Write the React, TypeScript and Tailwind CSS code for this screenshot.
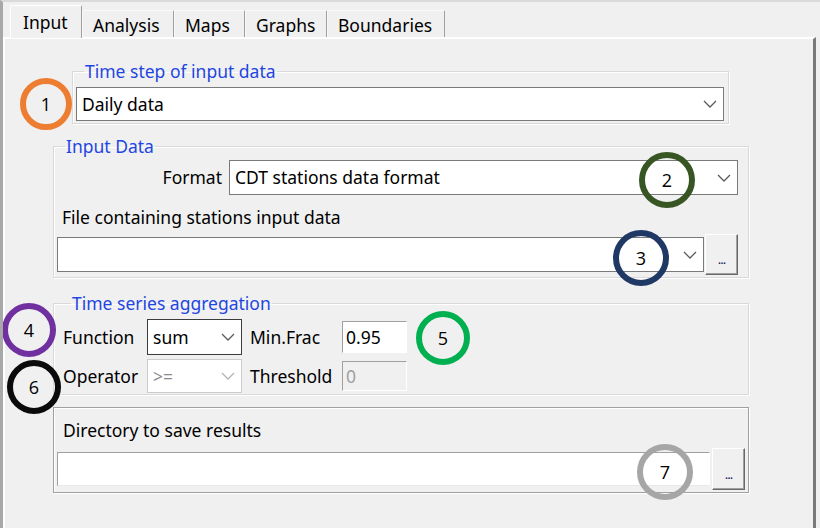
import type { ReactNode } from "react";

const font = { fontFamily: '"Noto Sans", "Open Sans", sans-serif' };

const tabs = [
  { label: "Input", w: "w-[72px]", active: true },
  { label: "Analysis", w: "w-[92px]", active: false },
  { label: "Maps", w: "w-[71px]", active: false },
  { label: "Graphs", w: "w-[82px]", active: false },
  { label: "Boundaries", w: "w-[118px]", active: false },
];

function Chevron({ disabled }: { disabled?: boolean }) {
  return (
    <svg width="14" height="8" viewBox="0 0 14 8" className="shrink-0">
      <path
        d="M1 1l6 6 6-6"
        fill="none"
        stroke={disabled ? "#b4b4b4" : "#5a5a5a"}
        strokeWidth="1.3"
      />
    </svg>
  );
}

function Combo({
  value,
  className,
  disabled,
  dark,
}: {
  value: string;
  className: string;
  disabled?: boolean;
  dark?: boolean;
}) {
  return (
    <div
      className={`flex items-center justify-between border bg-white pl-[5px] pr-[6px] ${
        dark ? "border-[#3c3c3c]" : disabled ? "border-[#cccccc]" : "border-[#7a7a7a]"
      } ${className}`}
    >
      <span className={disabled ? "text-[#8a8a8a]" : "text-black"}>{value}</span>
      <Chevron disabled={disabled} />
    </div>
  );
}

function DotsButton({ className }: { className: string }) {
  return (
    <div
      className={`flex items-end justify-center border border-t-white border-l-white border-r-[#696969] border-b-[#696969] bg-[#f0f0f0] pb-[8px] shadow-[inset_-1px_-1px_0_#a0a0a0] ${className}`}
    >
      <span className="text-[13px] leading-none tracking-[-1px] text-[#20206a]">...</span>
    </div>
  );
}

function Group({
  legend,
  className,
  children,
}: {
  legend: string;
  className: string;
  children: ReactNode;
}) {
  return (
    <fieldset
      className={`border border-[#d9d9d9] shadow-[inset_1px_1px_0_#fff,1px_1px_0_#fff] ${className}`}
    >
      <legend className="ml-[8px] px-[1px] leading-[22px] text-[#1f46e2]">{legend}</legend>
      {children}
    </fieldset>
  );
}

function Mark({ n, color, x, y, size }: { n: number; color: string; x: number; y: number; size: number }) {
  return (
    <div
      className="absolute flex items-center justify-center rounded-full border-[6px] text-[18px] text-black"
      style={{
        left: x - size / 2,
        top: y - size / 2,
        width: size,
        height: size,
        borderColor: color,
        fontFamily: '"Open Sans", sans-serif',
      }}
    >
      {n}
    </div>
  );
}

export default function App() {
  return (
    <div
      className="relative flex h-[528px] w-[820px] flex-col overflow-hidden border-t-2 border-l-[3px] border-t-[#dadada] border-l-[#a8a8a8] bg-[#f0f0f0] text-[17.5px] text-black"
      style={font}
    >
      {/* tabs */}
      <div className="flex h-[35px] items-end pl-[7px]">
        {tabs.map((t) =>
          t.active ? (
            <div
              key={t.label}
              className={`${t.w} relative z-10 -mb-[1px] flex h-[33px] items-start rounded-t-[2px] border-t border-l border-r border-t-white border-l-white border-r-[#a0a0a0] bg-[#f0f0f0] pl-[12px] pt-[3px]`}
            >
              {t.label}
            </div>
          ) : (
            <div
              key={t.label}
              className={`${t.w} flex h-[27px] items-start rounded-t-[2px] border-t border-r border-l border-t-[#fafafa] border-l-[#f8f8f8] border-r-[#a0a0a0] pl-[10px] pt-[1px]`}
            >
              {t.label}
            </div>
          )
        )}
        <div className="flex-1" />
      </div>

      {/* pane */}
      <div className="mr-[4px] flex flex-1 flex-col border-t-2 border-l-2 border-r-[3px] border-t-white border-l-white border-r-[#7a7a7a] pl-[5px]">
        <Group legend="Time step of input data" className="ml-[62px] mt-[21px] w-[657px] px-[3px] pb-[2px]">
          <Combo value="Daily data" className="mt-[5px] h-[34px] w-[648px]" />
        </Group>

        <Group legend="Input Data" className="ml-[43px] mt-[11px] w-[696px] px-[3px] pb-[2px]">
          <div className="mt-[3px] flex items-center">
            <span className="w-[172px] pr-[7px] text-right">Format</span>
            <Combo value="CDT stations data format" className="h-[35px] w-[509px]" />
          </div>
          <div className="mt-[11px] pl-[5px] leading-[22px]">File containing stations input data</div>
          <div className="mt-[6px] flex items-center">
            <Combo value="" className="h-[35px] w-[647px]" />
            <DotsButton className="ml-[1px] h-[41px] w-[33px]" />
          </div>
        </Group>

        <Group legend="Time series aggregation" className="ml-[43px] mt-[14px] w-[696px] px-[9px] pb-[1px]">
          <div className="mt-[5px] flex items-center">
            <span className="w-[84px]">Function</span>
            <Combo value="sum" dark className="h-[36px] w-[95px]" />
            <span className="ml-[8px] w-[92px]">Min.Frac</span>
            <div className="flex h-[32px] w-[65px] items-center border border-[#a0a0a0] border-r-white border-b-white bg-white pl-[3px]">
              0.95
            </div>
          </div>
          <div className="mt-[4px] flex items-center">
            <span className="w-[84px]">Operator</span>
            <Combo value=">=" disabled className="h-[34px] w-[95px]" />
            <span className="ml-[8px] w-[92px]">Threshold</span>
            <div className="flex h-[30px] w-[65px] items-center border border-[#a0a0a0] border-r-white border-b-white bg-[#f0f0f0] pl-[3px] text-[#a0a0a0]">
              0
            </div>
          </div>
        </Group>

        <div className="ml-[43px] mt-[12px] w-[696px] border border-[#a0a0a0] px-[3px] pb-[2px] shadow-[inset_1px_1px_0_#fff,1px_1px_0_#fff]">
          <div className="pl-[6px] pt-[11px] leading-[22px]">Directory to save results</div>
          <div className="mt-[7px] flex items-center">
            <div className="h-[34px] w-[654px] border border-[#a0a0a0] border-r-white border-b-[#e8e8e8] bg-white" />
            <DotsButton className="ml-[2px] h-[42px] w-[33px]" />
          </div>
        </div>
      </div>

      <Mark n={1} color="#ed7d31" x={43} y={102} size={52} />
      <Mark n={2} color="#375623" x={664} y={178} size={56} />
      <Mark n={3} color="#203864" x={638} y={256} size={56} />
      <Mark n={4} color="#7030a0" x={26} y={328} size={54} />
      <Mark n={5} color="#00b050" x={440} y={336} size={54} />
      <Mark n={6} color="#0a0a0a" x={31} y={385} size={54} />
      <Mark n={7} color="#a6a6a6" x={662} y={470} size={56} />
    </div>
  );
}
